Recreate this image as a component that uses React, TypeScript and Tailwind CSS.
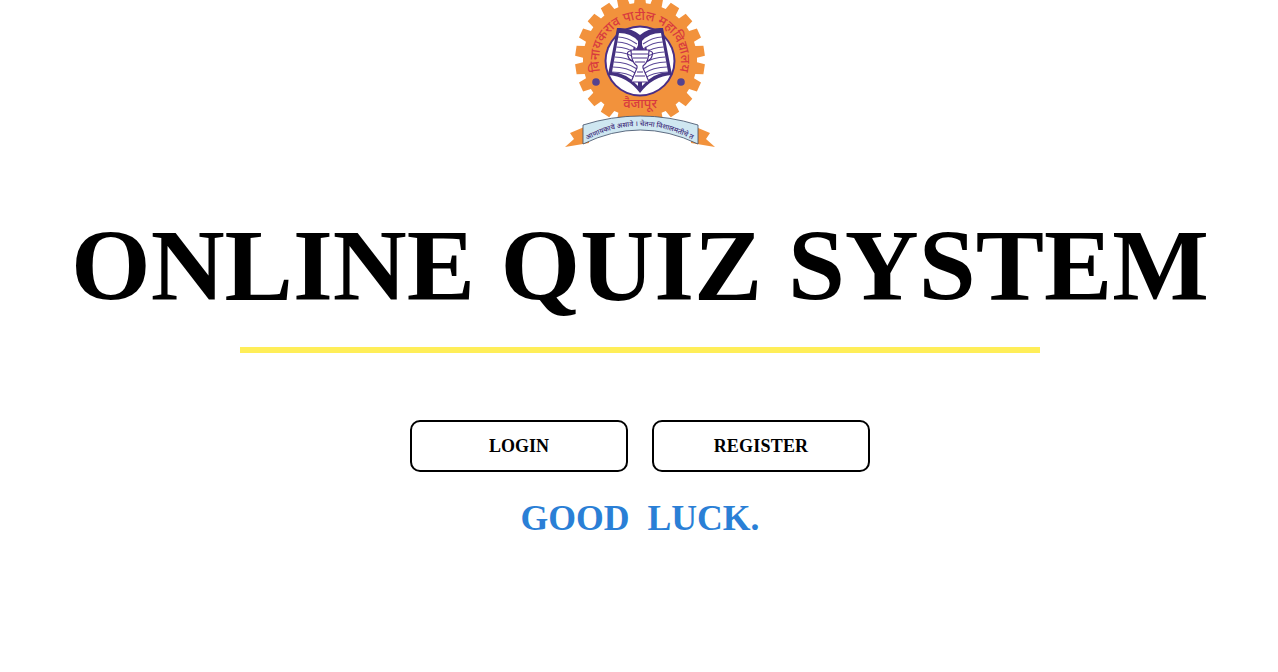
import React from 'react';

const serif = "font-['Liberation_Serif','Times_New_Roman',serif]";

// gear outline for the college crest
const gearPoints = () => {
  const teeth = 22;
  const cx = 75;
  const cy = 60;
  const pts: string[] = [];
  for (let i = 0; i < teeth; i++) {
    const a = (i / teeth) * Math.PI * 2 - Math.PI / 2;
    const step = (Math.PI * 2) / teeth;
    const corners: [number, number][] = [
      [-0.36, 57],
      [-0.27, 65],
      [0.27, 65],
      [0.36, 57],
    ];
    corners.forEach(([off, r]) => {
      const t = a + off * step;
      pts.push(`${(cx + r * Math.cos(t)).toFixed(1)},${(cy + r * Math.sin(t)).toFixed(1)}`);
    });
  }
  return pts.join(' ');
};

// ruled lines on one page of the book, mirrored for the other page
const pageLines = [37, 42, 47, 52, 57, 62, 67, 72];

const Logo: React.FC = () => (
  <svg width="150" height="150" viewBox="0 0 150 150" className="block" role="img" aria-label="College crest">
    <defs>
      <path id="crestTop" d="M 37 76 A 41 41 0 1 1 113 76" />
      <path id="crestBanner" d="M 22 140 Q 75 112 128 140" />
    </defs>
    <polygon points={gearPoints()} fill="#f2923c" />
    <circle cx="75" cy="61" r="35.5" fill="#4a2f86" />
    <circle cx="75" cy="61" r="33.5" fill="#ffffff" />

    {/* book */}
    <path d="M52 28 Q66 27 75 35 Q84 27 98 28 L107 75 Q88 76 75 93 Q62 76 43 75 Z" fill="#43307f" />
    <path d="M54 33 Q66 33 73 41 L73 86 Q62 73 47 72 Z" fill="#ffffff" />
    <path d="M96 33 Q84 33 77 41 L77 86 Q88 73 103 72 Z" fill="#ffffff" />
    <g stroke="#5d4a98" strokeWidth="1.2" fill="none">
      {pageLines.map((y) => (
        <React.Fragment key={y}>
          <path d={`M${53 - (y - 37) * 0.17} ${y} Q62 ${y} 72 ${y + 7}`} />
          <path d={`M${97 + (y - 37) * 0.17} ${y} Q88 ${y} 78 ${y + 7}`} />
        </React.Fragment>
      ))}
    </g>

    {/* trophy on the book */}
    <path d="M66 50 L84 50 Q84 62 78 66 L78 68 L84 82 L66 82 L72 68 L72 66 Q66 62 66 50 Z" fill="#ffffff" stroke="#4a2f86" strokeWidth="1.2" />
    <path d="M67 54 L83 54 M68 58 L82 58 M70 62 L80 62 M72 72 L78 72 M70 76 L80 76" stroke="#4a2f86" strokeWidth="1.2" />
    <path d="M66 51 Q61 51 63 56 Q64 60 68 61 M84 51 Q89 51 87 56 Q86 60 82 61" stroke="#4a2f86" strokeWidth="1.2" fill="none" />
    <path d="M68 50 L69 46 L71 50 L73 45 L75 50 L77 45 L79 50 L81 46 L82 50 Z" fill="#4a2f86" />

    <circle cx="31" cy="82" r="3.8" fill="#54428f" />
    <circle cx="116" cy="82" r="3.8" fill="#54428f" />

    <text fontSize="13" fontWeight="500" fill="#d83a3f" fontFamily="'Noto Sans', sans-serif">
      <textPath href="#crestTop" startOffset="50%" textAnchor="middle" textLength="150" lengthAdjust="spacingAndGlyphs">
        विनायकराव पाटील महाविद्यालय
      </textPath>
    </text>
    <text x="75" y="108" textAnchor="middle" fontSize="13" fontWeight="500" fill="#d83a3f" fontFamily="'Noto Sans', sans-serif">वैजापूर</text>

    {/* banner */}
    <path d="M0 147 L9 139 L5 133 L24 125 L24 143 Z" fill="#f2923c" />
    <path d="M150 147 L141 139 L145 133 L126 125 L126 143 Z" fill="#f2923c" />
    <path d="M18 125 Q75 107 133 125 L133 144 Q75 116 18 144 Z" fill="#cfe7f1" stroke="#3b4a63" strokeWidth="0.8" />
    <text fontSize="7" fontWeight="500" fill="#3d2a78" fontFamily="'Noto Sans', sans-serif">
      <textPath href="#crestBanner" startOffset="50%" textAnchor="middle">ज्ञान आणायकाचे असावे । चेतना विशालमतीचे तत्व ।।</textPath>
    </text>
  </svg>
);

const App: React.FC = () => {
  return (
    <div className={`min-h-screen bg-white flex flex-col items-center pl-[2px] ${serif}`}>
      <Logo />

      <h1 className="mt-[57px] text-[102.4px] leading-[118px] font-bold text-black whitespace-nowrap">
        ONLINE QUIZ SYSTEM
      </h1>

      <div className="mt-[22px] w-[800px] h-[6px] bg-[#ffee58]" />

      <div className="mt-[67px] flex gap-6">
        <button className="w-[218px] h-[52px] border-2 border-black rounded-[10px] bg-white text-lg font-bold text-black">
          LOGIN
        </button>
        <button className="w-[218px] h-[52px] border-2 border-black rounded-[10px] bg-white text-lg font-bold text-black tracking-[0.2px]">
          REGISTER
        </button>
      </div>

      <h2 className="mt-[23px] text-[35.7px] leading-[46px] font-bold text-[#2a7fd6] whitespace-pre">
        GOOD  LUCK.
      </h2>
    </div>
  );
};

export default App;
